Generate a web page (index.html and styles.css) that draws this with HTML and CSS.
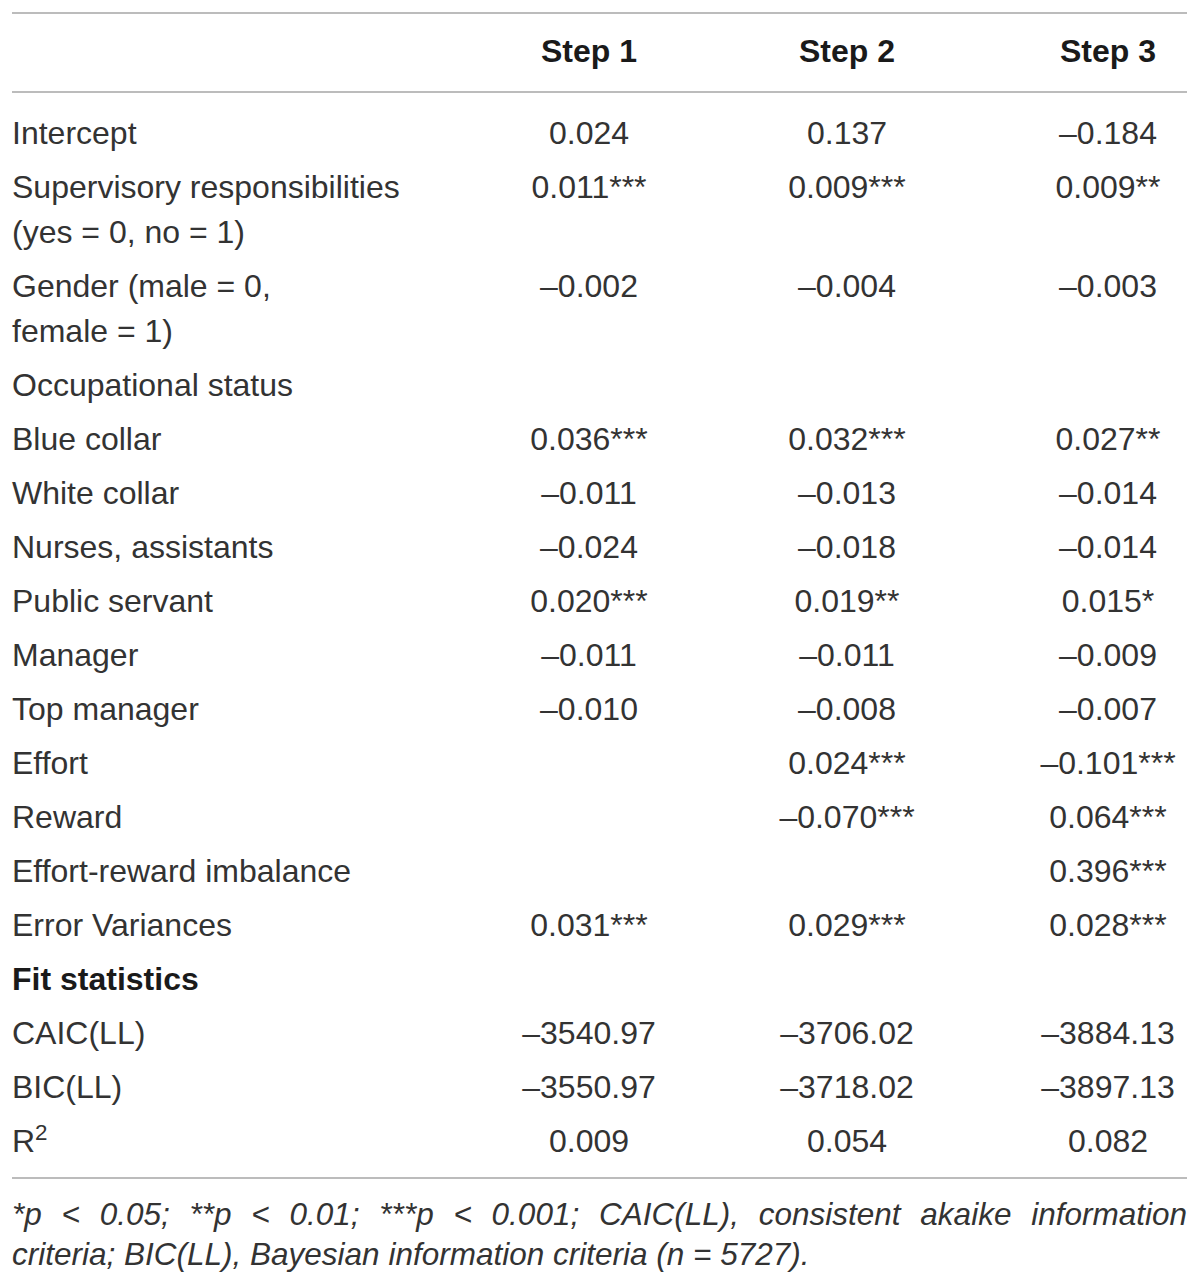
FILE: index.html
```html
<!DOCTYPE html>
<html lang="en">
<head>
  <meta charset="UTF-8">
  <title>Hierarchical regression</title>
  <link rel="stylesheet" href="styles.css">
</head>
<body>
  <!-- Regression table -->
  <table class="results">
    <colgroup>
      <col class="col-label">
      <col class="col-step">
      <col class="col-step">
      <col class="col-last">
    </colgroup>
    <thead>
      <tr>
        <th></th>
        <th>Step 1</th>
        <th>Step 2</th>
        <th class="last">Step 3</th>
      </tr>
    </thead>
    <tbody>
      <tr><td>Intercept</td><td>0.024</td><td>0.137</td><td class="last">–0.184</td></tr>
      <tr><td>Supervisory responsibilities<br>(yes = 0, no = 1)</td><td>0.011***</td><td>0.009***</td><td class="last">0.009**</td></tr>
      <tr><td>Gender (male = 0,<br>female = 1)</td><td>–0.002</td><td>–0.004</td><td class="last">–0.003</td></tr>
      <tr><td>Occupational status</td><td></td><td></td><td class="last"></td></tr>
      <tr><td>Blue collar</td><td>0.036***</td><td>0.032***</td><td class="last">0.027**</td></tr>
      <tr><td>White collar</td><td>–0.011</td><td>–0.013</td><td class="last">–0.014</td></tr>
      <tr><td>Nurses, assistants</td><td>–0.024</td><td>–0.018</td><td class="last">–0.014</td></tr>
      <tr><td>Public servant</td><td>0.020***</td><td>0.019**</td><td class="last">0.015*</td></tr>
      <tr><td>Manager</td><td>–0.011</td><td>–0.011</td><td class="last">–0.009</td></tr>
      <tr><td>Top manager</td><td>–0.010</td><td>–0.008</td><td class="last">–0.007</td></tr>
      <tr><td>Effort</td><td></td><td>0.024***</td><td class="last">–0.101***</td></tr>
      <tr><td>Reward</td><td></td><td>–0.070***</td><td class="last">0.064***</td></tr>
      <tr><td>Effort-reward imbalance</td><td></td><td></td><td class="last">0.396***</td></tr>
      <tr><td>Error Variances</td><td>0.031***</td><td>0.029***</td><td class="last">0.028***</td></tr>
      <tr><td class="bold">Fit statistics</td><td></td><td></td><td class="last"></td></tr>
      <tr><td>CAIC(LL)</td><td>–3540.97</td><td>–3706.02</td><td class="last">–3884.13</td></tr>
      <tr><td>BIC(LL)</td><td>–3550.97</td><td>–3718.02</td><td class="last">–3897.13</td></tr>
      <tr><td>R<sup>2</sup></td><td>0.009</td><td>0.054</td><td class="last">0.082</td></tr>
    </tbody>
  </table>

  <!-- Nota sotto la tabella -->
  <p class="note">
    <span class="note-line full">*p &lt; 0.05; **p &lt; 0.01; ***p &lt; 0.001; CAIC(LL), consistent akaike information</span>
    <span class="note-line">criteria; BIC(LL), Bayesian information criteria (n = 5727).</span>
  </p>
</body>
</html>
```

FILE: styles.css
```css
* {
  margin: 0;
  padding: 0;
  box-sizing: border-box;
}
body {
  background: #fff;
  color: #333;
  font-family: 'Liberation Sans', Arial, sans-serif;
  font-size: 32px;
  padding: 12px 13px 0 12px;
}

/* Tabella */
.results {
  width: 1175px;
  border-collapse: collapse;
  table-layout: fixed;
}
.col-label { width: 448px; }
.col-step { width: 258px; }
.col-last { width: 211px; }

.results th,
.results td {
  line-height: 45px;
  text-align: center;
  vertical-align: top;
  padding: 4.5px 0;
  white-space: nowrap;
}
.results th:first-child,
.results td:first-child {
  text-align: left;
}
.results .last {
  padding-left: 53px;
}

.results thead tr {
  border-top: 2px solid #bcbcbc;
  border-bottom: 2px solid #bcbcbc;
}
.results th {
  font-weight: 700;
  color: #1a1a1a;
  padding: 15px 0 17px;
}
.results th.last {
  padding-left: 53px;
}

.results tbody tr:first-child td { padding-top: 18px; }
.results tbody tr:last-child td { padding-bottom: 13px; }
.results tbody tr:last-child { border-bottom: 2px solid #bcbcbc; }

.bold {
  font-weight: 700;
  color: #1a1a1a;
}
sup {
  font-size: 0.7em;
  line-height: 0;
  vertical-align: 0.55em;
}

/* Nota */
.note {
  font-style: italic;
  font-size: 31.5px;
  line-height: 40px;
  padding-top: 15px;
}
.note-line {
  display: block;
}
.note-line.full {
  text-align: justify;
  text-align-last: justify;
}
```
